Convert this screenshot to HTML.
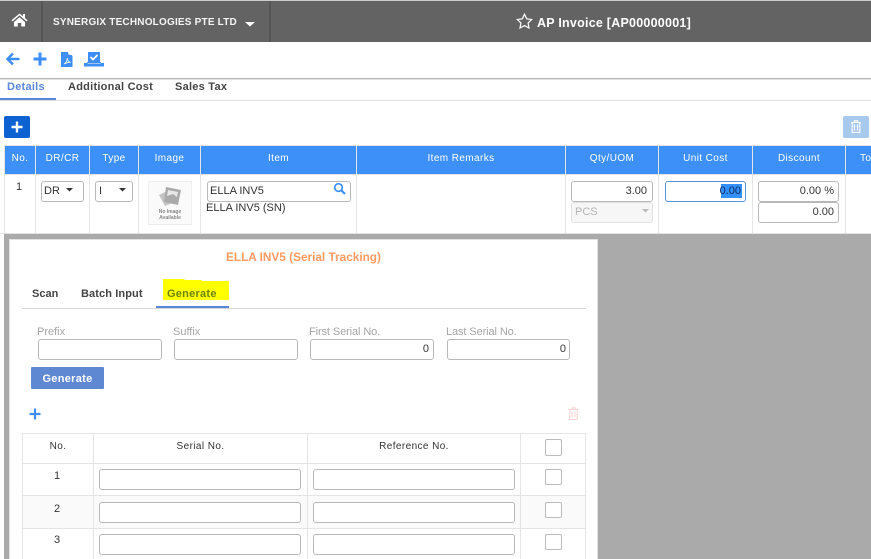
<!DOCTYPE html>
<html><head><meta charset="utf-8"><style>
html,body{margin:0;padding:0;background:#fff}
body{width:871px;height:559px;position:relative;overflow:hidden;font-family:"Liberation Sans",sans-serif;font-size:11px;color:#333}
.a{position:absolute;white-space:nowrap;line-height:14px}
.r{position:absolute}
.v{position:absolute;width:1px;background:#e4e4e4}
.h{position:absolute;height:1px;background:#e4e4e4}
.in{position:absolute;box-sizing:border-box;background:#fff;border:1px solid #b8b8b8;border-radius:3px;height:21px}
.th{position:absolute;text-align:center;color:#fff;font-size:10px;letter-spacing:.4px;top:152px;line-height:14px}
.b{font-weight:bold}
.lab{color:#a5a5a5;font-size:11px;top:325px}
.num{position:absolute;text-align:right;line-height:14px;font-size:11px}
.cb{position:absolute;box-sizing:border-box;width:17px;height:16px;border:1px solid #bbb;border-radius:2px;background:#fff}
.ct{position:absolute;text-align:center;line-height:14px}
.tb{letter-spacing:.25px}
</style></head><body>
<!-- header -->
<div class="r" style="left:0;top:0;width:871px;height:1px;background:#ccc"></div>
<div class="r" style="left:0;top:1px;width:871px;height:41px;background:#636363"></div>
<div class="r" style="left:41px;top:1px;width:2px;height:41px;background:#555"></div>
<div class="r" style="left:269px;top:1px;width:2px;height:41px;background:#555"></div>
<svg class="r" style="left:11px;top:13px" width="17" height="14" viewBox="0 0 17 14"><path d="M8.500 0.500L0.500 7.200l1 1.200 7-6 7 6 1-1.200-2.500-2.200V1h-2v2.300zM3 9l5.500-4.700L14 9v4.500h-3.800V10H6.800v3.500H3z" fill="#fff"/></svg>
<div class="a b" style="left:53px;top:15px;color:#f4f4f4;font-size:10px;letter-spacing:.2px;line-height:16px">SYNERGIX TECHNOLOGIES PTE LTD</div>
<svg class="r" style="left:245px;top:22px" width="10" height="5"><path d="M0 0h10L5 4.500z" fill="#fff"/></svg>
<svg class="r" style="left:516px;top:13px" width="17" height="16" viewBox="0 0 17 16"><path d="M8.500 1.200l2.200 4.600 5 .7-3.600 3.500.9 5-4.500-2.400L4 15l.9-5L1.300 6.500l5-.7z" fill="none" stroke="#fff" stroke-width="1.200"/></svg>
<div class="a b" style="left:537px;top:16px;color:#fff;font-size:12.500px;letter-spacing:.24px">AP Invoice [AP00000001]</div>
<!-- toolbar -->
<svg class="r" style="left:6px;top:52px" width="14" height="14" viewBox="0 0 14 14"><path d="M7 1.500L1.500 7 7 12.500M2 7h11.500" fill="none" stroke="#3d8ff5" stroke-width="2.400"/></svg>
<svg class="r" style="left:33px;top:52px" width="14" height="14" viewBox="0 0 14 14"><path d="M7 .5v13M.5 7h13" stroke="#3d8ff5" stroke-width="3"/></svg>
<svg class="r" style="left:61px;top:52px" width="12" height="15" viewBox="0 0 12 15"><path d="M0 0h7l.5 2.500 3 .5 1 1V15H0z" fill="#3d8ff5"/><path d="M3 12c2-1 3-3 3.300-6 .3 3 1.500 4 3.200 4.300-2 0-4 .4-6.500 1.700z" fill="none" stroke="#fff" stroke-width=".8"/></svg>
<svg class="r" style="left:84px;top:52px" width="20" height="15" viewBox="0 0 20 15"><path d="M4 0h12v10h-12z" fill="#3d8ff5"/><path d="M0 14.500v-3.500h3.500v1h13v-1H20v3.500z" fill="#3d8ff5"/><path d="M3 10h14v1.500H3z" fill="#3d8ff5"/><path d="M6.500 5l2.500 2.500 4.500-4.500" fill="none" stroke="#fff" stroke-width="1.800"/></svg>
<div class="r" style="left:0;top:78px;width:871px;height:1px;background:#b5b5b5"></div>
<div class="r" style="left:0;top:79px;width:871px;height:1px;background:#e2e2e2"></div>
<!-- tabs -->
<div class="a b tb" style="left:7px;top:80px;color:#5b87d8">Details</div>
<div class="a b tb" style="left:68px;top:80px;color:#444">Additional Cost</div>
<div class="a b tb" style="left:175px;top:80px;color:#444">Sales Tax</div>
<div class="r" style="left:0;top:100px;width:871px;height:1px;background:#e0e0e0"></div>
<div class="r" style="left:0;top:98px;width:56px;height:2px;background:#5b87d8"></div>
<!-- buttons -->
<div class="r" style="left:4px;top:116px;width:26px;height:22px;background:#0b62d0;border-radius:2px"></div>
<svg class="r" style="left:11px;top:121px" width="12" height="12"><path d="M6 .5v11M.5 6h11" stroke="#fff" stroke-width="2.400"/></svg>
<div class="r" style="left:843px;top:116px;width:26px;height:22px;background:#a8c9ee;border-radius:2px"></div>
<svg class="r" style="left:851px;top:120px" width="10" height="13" viewBox="0 0 10 13"><path d="M0 2.500h10M3.500 2.500V.8h3v1.700M1.200 2.500V12.500h7.600V2.500M3.500 4.500v6M6.500 4.500v6" fill="none" stroke="#fff" stroke-width="1.100"/></svg>
<!-- main table -->
<div class="r" style="left:4px;top:146px;width:867px;height:28px;background:#3d90f8"></div>
<div class="h" style="left:4px;top:145px;width:867px"></div>
<div class="h" style="left:4px;top:174px;width:867px"></div>
<div class="v" style="left:4px;top:146px;height:88px"></div>
<div class="v" style="left:35px;top:146px;height:88px"></div>
<div class="v" style="left:89px;top:146px;height:88px"></div>
<div class="v" style="left:138px;top:146px;height:88px"></div>
<div class="v" style="left:200px;top:146px;height:88px"></div>
<div class="v" style="left:356px;top:146px;height:88px"></div>
<div class="v" style="left:565px;top:146px;height:88px"></div>
<div class="v" style="left:658px;top:146px;height:88px"></div>
<div class="v" style="left:752px;top:146px;height:88px"></div>
<div class="v" style="left:845px;top:146px;height:88px"></div>
<div class="th" style="left:5px;width:30px">No.</div>
<div class="th" style="left:36px;width:53px">DR/CR</div>
<div class="th" style="left:90px;width:48px">Type</div>
<div class="th" style="left:139px;width:61px">Image</div>
<div class="th" style="left:201px;width:155px">Item</div>
<div class="th" style="left:357px;width:208px">Item Remarks</div>
<div class="th" style="left:566px;width:92px">Qty/UOM</div>
<div class="th" style="left:659px;width:93px">Unit Cost</div>
<div class="th" style="left:753px;width:92px">Discount</div>
<div class="th" style="left:860px;width:40px;text-align:left">Total</div>
<div class="ct" style="left:5px;width:28px;top:180px">1</div>
<div class="in" style="left:41px;top:181px;width:43px"></div>
<div class="a" style="left:44px;top:184px">DR</div>
<svg class="r" style="left:66px;top:188px" width="8" height="4"><path d="M0 0h7L3.500 3.500z" fill="#333"/></svg>
<div class="in" style="left:95px;top:181px;width:38px"></div>
<div class="a" style="left:99px;top:184px">I</div>
<svg class="r" style="left:119px;top:188px" width="8" height="4"><path d="M0 0h7L3.500 3.500z" fill="#333"/></svg>
<div class="r" style="left:148px;top:181px;width:42px;height:42px;border:1px solid #eee;background:#fafafa"></div>
<svg class="r" style="left:158px;top:185px" width="24" height="23" viewBox="0 0 24 23"><path d="M1 10l8-4 5 12-7 3z" fill="#c4c4c4"/><path d="M8 2l15 3-3 15-14-3z" fill="#aaa"/><path d="M10 5l10 2-1 5-4-3-6 2z" fill="#e8e8e8"/></svg>
<div class="a" style="left:149px;top:209px;width:42px;text-align:center;font-size:5px;line-height:6px;color:#888;font-weight:bold;white-space:normal">No Image Available</div>
<div class="in" style="left:207px;top:181px;width:144px"></div>
<div class="a" style="left:210px;top:184px">ELLA INV5</div>
<svg class="r" style="left:333px;top:182px" width="13" height="13" viewBox="0 0 13 13"><circle cx="5.500" cy="5.500" r="3.800" fill="none" stroke="#3d8ff5" stroke-width="1.700"/><path d="M8.500 8.500l3.500 3.500" stroke="#3d8ff5" stroke-width="2.200"/></svg>
<div class="a" style="left:206px;top:201px">ELLA INV5 (SN)</div>
<div class="in" style="left:571px;top:181px;width:82px"></div>
<div class="num" style="left:571px;width:76px;top:184px">3.00</div>
<div class="in" style="left:571px;top:202px;width:82px;background:#f6f6f6;border-color:#e2e2e2"></div>
<div class="a" style="left:575px;top:205px;color:#b5b5b5">PCS</div>
<svg class="r" style="left:642px;top:209px" width="8" height="4"><path d="M0 0h7L3.500 3.500z" fill="#bbb"/></svg>
<div class="in" style="left:665px;top:181px;width:81px;border-color:#5b93d8"></div>
<div class="r" style="left:721px;top:184px;width:21px;height:14px;background:#3390ff"></div>
<div class="num" style="left:665px;width:76px;top:184px;color:#0d2a55">0.00</div>
<div class="in" style="left:758px;top:181px;width:81px"></div>
<div class="num" style="left:758px;width:76px;top:184px">0.00 %</div>
<div class="in" style="left:758px;top:202px;width:81px"></div>
<div class="num" style="left:758px;width:76px;top:205px">0.00</div>
<!-- overlay -->
<div class="r" style="left:0;top:233px;width:871px;height:1px;background:#e4e4e4"></div>
<div class="r" style="left:0;top:234px;width:871px;height:325px;background:#aaa"></div>
<div class="r" style="left:0;top:234px;width:4px;height:325px;background:#fff"></div>
<div class="r" style="left:9px;top:239px;width:589px;height:320px;background:#fff;box-sizing:border-box;border:1px solid #e2e2e2;border-bottom:none"></div>
<div class="a b" style="left:226px;top:250px;color:#ff9a62;font-size:11.800px">ELLA INV5 (Serial Tracking)</div>
<!-- sub tabs -->
<div class="a b" style="left:32px;top:287px;color:#444">Scan</div>
<div class="a b" style="left:81px;top:287px;color:#444;letter-spacing:.1px">Batch Input</div>
<svg class="r" style="left:163px;top:279px" width="66" height="21"><path d="M0 0h21l1 1h16l1 1h27v19H0z" fill="#ffff00"/></svg>
<div class="a b tb" style="left:167px;top:287px;color:#6e8400">Generate</div>
<div class="r" style="left:22px;top:308px;width:564px;height:1px;background:#d8d8d8"></div>
<div class="r" style="left:156px;top:306px;width:73px;height:2px;background:#5b87d8"></div>
<!-- form -->
<div class="a lab" style="left:37px">Prefix</div>
<div class="a lab" style="left:173px">Suffix</div>
<div class="a lab" style="left:309px;letter-spacing:-.1px">First Serial No.</div>
<div class="a lab" style="left:446px;letter-spacing:-.1px">Last Serial No.</div>
<div class="in" style="left:38px;top:339px;width:124px"></div>
<div class="in" style="left:174px;top:339px;width:124px"></div>
<div class="in" style="left:310px;top:339px;width:124px"></div>
<div class="in" style="left:447px;top:339px;width:123px"></div>
<div class="num" style="left:310px;width:119px;top:342px">0</div>
<div class="num" style="left:447px;width:119px;top:342px">0</div>
<div class="r" style="left:31px;top:367px;width:73px;height:22px;background:#5f88d3;border-radius:1px"></div>
<div class="a b" style="left:31px;top:372px;width:73px;text-align:center;color:#fff;letter-spacing:.3px">Generate</div>
<svg class="r" style="left:29px;top:408px" width="12" height="12"><path d="M6 .5v11M.5 6h11" stroke="#3d8ff5" stroke-width="2.200"/></svg>
<svg class="r" style="left:568px;top:407px" width="11" height="13" viewBox="0 0 11 13"><path d="M.5 2.500h10M4 2.500V.8h3v1.700M1.800 2.500V12.500h7.400V2.500M4 4.500v6M7 4.500v6" fill="none" stroke="#fbd3d3" stroke-width="1.100"/></svg>
<!-- serial table -->
<div class="r" style="left:23px;top:495px;width:563px;height:33px;background:#fafafa"></div>
<div class="h" style="left:22px;top:433px;width:564px"></div>
<div class="h" style="left:22px;top:463px;width:564px"></div>
<div class="h" style="left:22px;top:495px;width:564px"></div>
<div class="h" style="left:22px;top:528px;width:564px"></div>
<div class="v" style="left:22px;top:433px;height:126px"></div>
<div class="v" style="left:93px;top:433px;height:126px"></div>
<div class="v" style="left:307px;top:433px;height:126px"></div>
<div class="v" style="left:520px;top:433px;height:126px"></div>
<div class="v" style="left:585px;top:433px;height:126px"></div>
<div class="ct" style="left:23px;width:70px;top:440px;font-size:10px;letter-spacing:.4px">No.</div>
<div class="ct" style="left:94px;width:213px;top:440px;font-size:10px;letter-spacing:.4px">Serial No.</div>
<div class="ct" style="left:308px;width:212px;top:440px;font-size:10px;letter-spacing:.4px">Reference No.</div>
<div class="cb" style="left:545px;top:439px;height:17px"></div>
<div class="ct" style="left:23px;width:68px;top:469px">1</div>
<div class="in" style="left:99px;top:469px;width:202px"></div>
<div class="in" style="left:313px;top:469px;width:202px"></div>
<div class="cb" style="left:545px;top:469px"></div>
<div class="ct" style="left:23px;width:68px;top:502px">2</div>
<div class="in" style="left:99px;top:502px;width:202px"></div>
<div class="in" style="left:313px;top:502px;width:202px"></div>
<div class="cb" style="left:545px;top:502px"></div>
<div class="ct" style="left:23px;width:68px;top:533px">3</div>
<div class="in" style="left:99px;top:534px;width:202px"></div>
<div class="in" style="left:313px;top:534px;width:202px"></div>
<div class="cb" style="left:545px;top:534px"></div>
</body></html>
